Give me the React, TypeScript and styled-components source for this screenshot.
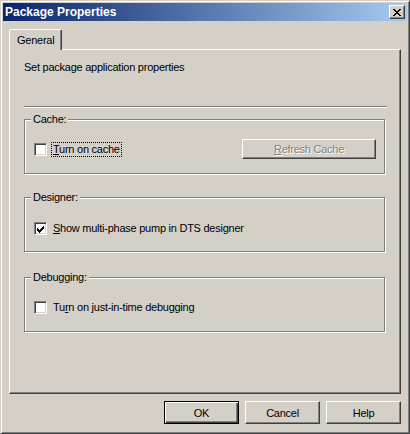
import * as React from "react";
import styled, { createGlobalStyle } from "styled-components";

const Global = createGlobalStyle`
  html, body {
    margin: 0;
    padding: 0;
    background: #d4d0c8;
  }
  * {
    box-sizing: border-box;
  }
`;

const Window = styled.div`
  width: 410px;
  height: 434px;
  display: flex;
  flex-direction: column;
  padding: 2px;
  background: #d4d0c8;
  border: 1px solid;
  border-color: #d4d0c8 #404040 #404040 #d4d0c8;
  box-shadow: inset 1px 1px 0 #ffffff, inset -1px -1px 0 #808080;
  font-family: "Liberation Sans", Arial, sans-serif;
  font-size: 11px;
  letter-spacing: -0.25px;
  color: #000;
`;

const TitleBar = styled.div`
  height: 18px;
  display: flex;
  align-items: center;
  justify-content: space-between;
  padding: 0 2px 0 2px;
  background: linear-gradient(to right, #0a246a, #a6caf0);
`;

const Caption = styled.span`
  color: #fff;
  font-weight: bold;
  font-size: 12px;
  letter-spacing: 0;
  line-height: 18px;
`;

const CloseButton = styled.div`
  width: 16px;
  height: 14px;
  display: flex;
  align-items: center;
  justify-content: center;
  background: #d4d0c8;
  border: 1px solid;
  border-color: #fff #404040 #404040 #fff;
  box-shadow: inset -1px -1px 0 #808080;
`;

const TabArea = styled.div`
  margin: 8px 6px 0 6px;
  display: flex;
  flex-direction: column;
`;

const TabStrip = styled.div`
  display: flex;
  height: 20px;
`;

const Tab = styled.div`
  position: relative;
  z-index: 1;
  width: 53px;
  height: 21px;
  padding: 4px 0 0 7px;
  background: #d4d0c8;
  border-top: 1px solid #fff;
  border-left: 1px solid #fff;
  border-right: 1px solid #404040;
  box-shadow: inset -1px 0 0 #808080;
  border-radius: 2px 2px 0 0;
  line-height: 13px;
`;

const Panel = styled.div`
  height: 345px;
  padding: 11px 14px 0 14px;
  border: 1px solid;
  border-color: #fff #404040 #404040 #fff;
  box-shadow: inset -1px -1px 0 #808080;
  display: flex;
  flex-direction: column;
`;

const Intro = styled.div`
  line-height: 13px;
  height: 13px;
`;

const Separator = styled.div`
  margin: 32px 0 0 0;
  width: 363px;
  height: 2px;
  border-top: 1px solid #808080;
  border-bottom: 1px solid #fff;
`;

const Group = styled.div<{ $gap: number }>`
  position: relative;
  width: 361px;
  height: 55px;
  margin-top: ${(p) => p.$gap}px;
  border: 1px solid #808080;
  box-shadow: 1px 1px 0 #fff, inset 1px 1px 0 #fff;
  padding: 19px 8px 0 9px;
`;

const Legend = styled.span`
  position: absolute;
  top: -7px;
  left: 6px;
  padding: 0 2px;
  background: #d4d0c8;
  line-height: 13px;
`;

const Row = styled.div<{ $drop?: number }>`
  height: 20px;
  margin-top: ${(p) => p.$drop ?? 0}px;
  display: flex;
  align-items: center;
  justify-content: space-between;
`;

const CheckLine = styled.div`
  display: flex;
  align-items: center;
`;

const Box = styled.div`
  width: 13px;
  height: 13px;
  background: #fff;
  border: 1px solid;
  border-color: #808080 #fff #fff #808080;
  box-shadow: inset 1px 1px 0 #404040, inset -1px -1px 0 #d4d0c8;
  display: flex;
  padding: 3px 0 0 2px;
`;

const Label = styled.span<{ $focus?: boolean }>`
  margin-left: 4px;
  padding: 0 1px;
  line-height: 13px;
  border: 1px dotted ${(p) => (p.$focus ? "#000" : "transparent")};
`;

const Key = styled.span`
  text-decoration: underline;
`;

const Button = styled.div<{ $default?: boolean; $disabled?: boolean }>`
  width: 75px;
  height: 23px;
  display: flex;
  align-items: center;
  justify-content: center;
  background: #d4d0c8;
  border: 1px solid;
  border-color: ${(p) => (p.$default ? "#000" : "#fff #404040 #404040 #fff")};
  box-shadow: ${(p) =>
    p.$default
      ? "inset 1px 1px 0 #fff, inset -1px -1px 0 #404040, inset -2px -2px 0 #808080"
      : "inset -1px -1px 0 #808080"};
  color: ${(p) => (p.$disabled ? "#808080" : "#000")};
  text-shadow: ${(p) => (p.$disabled ? "1px 1px 0 #fff" : "none")};
`;

const WideButton = styled(Button)`
  width: 134px;
  height: 20px;
`;

const Footer = styled.div`
  display: flex;
  justify-content: flex-end;
  gap: 6px;
  margin: 7px 6px 0 0;
`;

const Check = () => (
  <svg width="7" height="7" viewBox="0 0 7 7" shapeRendering="crispEdges">
    <path
      d="M0 2h1v3H0zM1 3h1v3H1zM2 4h1v3H2zM3 3h1v3H3zM4 2h1v3H4zM5 1h1v3H5zM6 0h1v3H6z"
      fill="#000"
    />
  </svg>
);

const CloseGlyph = () => (
  <svg width="8" height="7" viewBox="0 0 8 7" shapeRendering="crispEdges">
    <path
      d="M0 0h2v1H0zM6 0h2v1H6zM1 1h2v1H1zM5 1h2v1H5zM2 2h4v1H2zM3 3h2v1H3zM2 4h4v1H2zM1 5h2v1H1zM5 5h2v1H5zM0 6h2v1H0zM6 6h2v1H6z"
      fill="#000"
    />
  </svg>
);

export default function App() {
  return (
    <>
      <Global />
      <Window>
        <TitleBar>
          <Caption>Package Properties</Caption>
          <CloseButton>
            <CloseGlyph />
          </CloseButton>
        </TitleBar>

        <TabArea>
          <TabStrip>
            <Tab>General</Tab>
          </TabStrip>
          <Panel>
            <Intro>Set package application properties</Intro>
            <Separator />

            <Group $gap={11}>
              <Legend>Cache:</Legend>
              <Row>
                <CheckLine>
                  <Box />
                  <Label $focus>
                    <Key>T</Key>urn on cache
                  </Label>
                </CheckLine>
                <WideButton $disabled>
                  <span>
                    <Key>R</Key>efresh Cache
                  </span>
                </WideButton>
              </Row>
            </Group>

            <Group $gap={23}>
              <Legend>Designer:</Legend>
              <Row $drop={1}>
                <CheckLine>
                  <Box>
                    <Check />
                  </Box>
                  <Label>
                    <Key>S</Key>how multi-phase pump in DTS designer
                  </Label>
                </CheckLine>
              </Row>
            </Group>

            <Group $gap={25}>
              <Legend>Debugging:</Legend>
              <Row>
                <CheckLine>
                  <Box />
                  <Label>
                    Tu<Key>r</Key>n on just-in-time debugging
                  </Label>
                </CheckLine>
              </Row>
            </Group>
          </Panel>
        </TabArea>

        <Footer>
          <Button $default>OK</Button>
          <Button>Cancel</Button>
          <Button>Help</Button>
        </Footer>
      </Window>
    </>
  );
}
